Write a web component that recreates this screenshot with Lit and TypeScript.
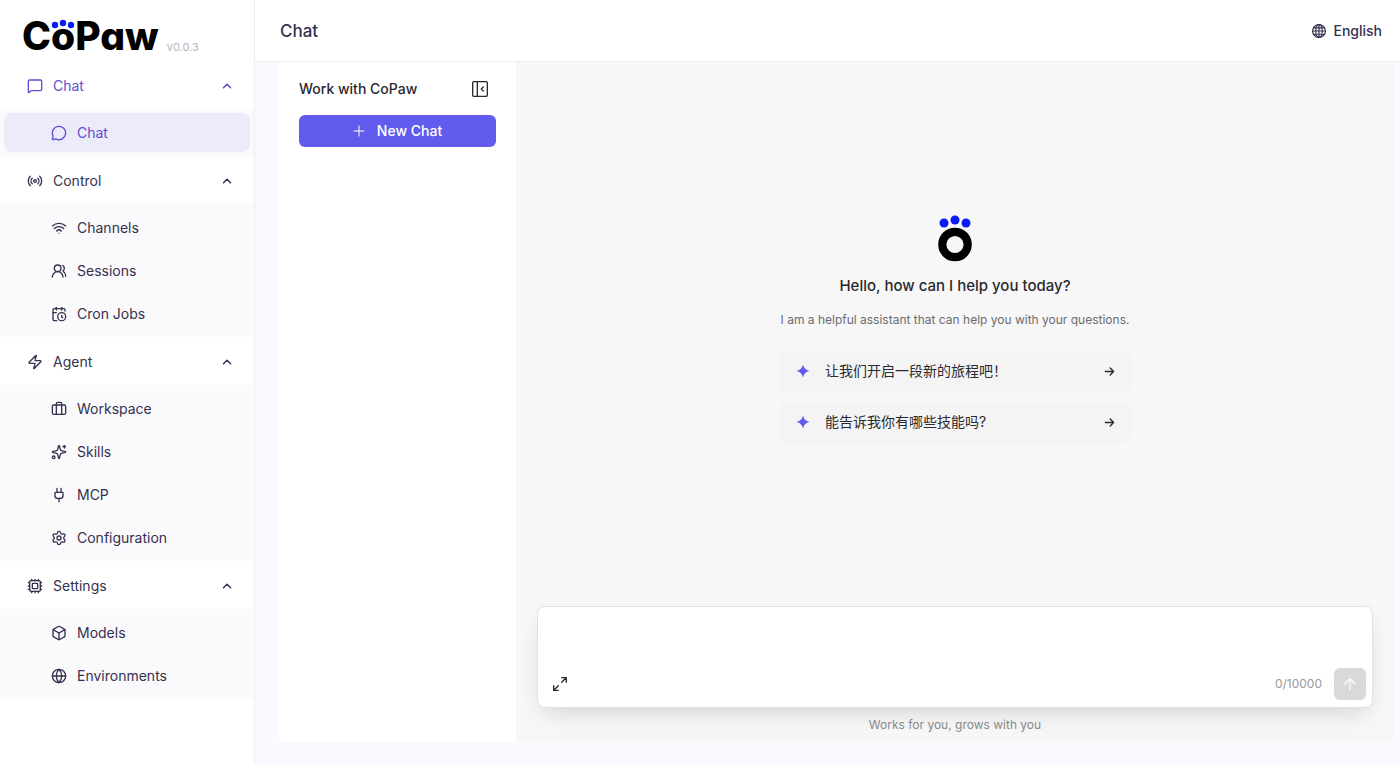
import { LitElement, html, css, svg } from "lit";
import { customElement, property, state } from "lit/decorators.js";
import { classMap } from "lit/directives/class-map.js";

const glyphs: Record<string, unknown> = {
  message: svg`<path d="M22 17a2 2 0 0 1-2 2H6.828a2 2 0 0 0-1.414.586l-2.202 2.202A.71.71 0 0 1 2 21.286V5a2 2 0 0 1 2-2h16a2 2 0 0 1 2 2z"/>`,
  bubble: svg`<path d="M2.992 16.342a2 2 0 0 1 .094 1.167l-1.065 3.290a1 1 0 0 0 1.236 1.168l3.413-.998a2 2 0 0 1 1.099.092 10 10 0 1 0-4.777-4.719"/>`,
  radio: svg`<path d="M4.900 19.100C1 15.200 1 8.800 4.900 4.900"/><path d="M7.800 16.200c-2.300-2.300-2.300-6.100 0-8.500"/><circle cx="12" cy="12" r="2"/><path d="M16.200 7.800c2.300 2.300 2.300 6.100 0 8.500"/><path d="M19.100 4.900C23 8.800 23 15.100 19.100 19"/>`,
  wifi: svg`<path d="M12 20h.01"/><path d="M2 8.820a15 15 0 0 1 20 0"/><path d="M5 12.860a10 10 0 0 1 14 0"/><path d="M8.500 16.430a5 5 0 0 1 7 0"/>`,
  users: svg`<path d="M18 21a8 8 0 0 0-16 0"/><circle cx="10" cy="8" r="5"/><path d="M22 20c0-3.370-2-6.500-4-8a5 5 0 0 0-.450-8.300"/>`,
  calendar: svg`<path d="M21 7.500V6a2 2 0 0 0-2-2H5a2 2 0 0 0-2 2v14a2 2 0 0 0 2 2h3.500"/><path d="M16 2v4"/><path d="M8 2v4"/><path d="M3 10h5"/><path d="M17.500 17.500 16 16.300V14"/><circle cx="16" cy="16" r="6"/>`,
  zap: svg`<path d="M4 14a1 1 0 0 1-.780-1.630l9.900-10.200a.500.500 0 0 1 .860.460l-1.920 6.020A1 1 0 0 0 13 10h7a1 1 0 0 1 .780 1.630l-9.900 10.200a.500.500 0 0 1-.860-.460l1.920-6.020A1 1 0 0 0 11 14z"/>`,
  briefcase: svg`<path d="M16 20V4a2 2 0 0 0-2-2h-4a2 2 0 0 0-2 2v16"/><rect width="20" height="14" x="2" y="6" rx="2"/>`,
  sparkles: svg`<path d="M9.940 15.500A2 2 0 0 0 8.500 14.060l-6.140-1.580a.500.500 0 0 1 0-.960L8.500 9.940A2 2 0 0 0 9.940 8.500l1.580-6.140a.500.500 0 0 1 .960 0L14.060 8.500A2 2 0 0 0 15.500 9.940l6.140 1.580a.500.500 0 0 1 0 .960L15.500 14.060a2 2 0 0 0-1.440 1.440l-1.580 6.140a.500.500 0 0 1-.960 0z"/><path d="M20 2v4"/><path d="M22 4h-4"/><circle cx="4" cy="20" r="2"/>`,
  plug: svg`<path d="M12 22v-5M15 8V2M9 8V2"/><path d="M17 8a1 1 0 0 1 1 1v4a4 4 0 0 1-4 4h-4a4 4 0 0 1-4-4V9a1 1 0 0 1 1-1z"/>`,
  gear: svg`<path d="M9.671 4.136a2.340 2.340 0 0 1 4.659 0 2.340 2.340 0 0 0 3.319 1.915 2.340 2.340 0 0 1 2.330 4.033 2.340 2.340 0 0 0 0 3.831 2.340 2.340 0 0 1-2.330 4.033 2.340 2.340 0 0 0-3.319 1.915 2.340 2.340 0 0 1-4.659 0 2.340 2.340 0 0 0-3.320-1.915 2.340 2.340 0 0 1-2.330-4.033 2.340 2.340 0 0 0 0-3.831A2.340 2.340 0 0 1 6.350 6.051a2.340 2.340 0 0 0 3.319-1.915"/><circle cx="12" cy="12" r="3"/>`,
  chip: svg`<rect x="4" y="4" width="16" height="16" rx="2"/><rect x="8" y="8" width="8" height="8" rx="1"/><path d="M12 20v2M12 2v2M17 20v2M17 2v2M2 12h2M2 17h2M2 7h2M20 12h2M20 17h2M20 7h2M7 20v2M7 2v2"/>`,
  box: svg`<path d="M21 8a2 2 0 0 0-1-1.730l-7-4a2 2 0 0 0-2 0l-7 4A2 2 0 0 0 3 8v8a2 2 0 0 0 1 1.730l7 4a2 2 0 0 0 2 0l7-4A2 2 0 0 0 21 16Z"/><path d="m3.300 7 8.700 5 8.700-5"/><path d="M12 22V12"/>`,
  globe: svg`<circle cx="12" cy="12" r="10"/><path d="M12 2a14.500 14.500 0 0 0 0 20 14.500 14.500 0 0 0 0-20"/><path d="M2 12h20"/>`,
  grid: svg`<circle cx="12" cy="12" r="11"/><ellipse cx="12" cy="12" rx="5.500" ry="11"/><path d="M12 1v22M1 12h22M3 6.500h18M3 17.500h18"/>`,
  chevron: svg`<path d="m5 15.500 7-7 7 7"/>`,
  collapse: svg`<rect x="1" y="1" width="22" height="22" rx="1.500"/><path d="M8 1v22"/><path d="M17 9l-3 3 3 3"/>`,
  plus: svg`<path d="M12 2v20M2 12h20"/>`,
  arrowRight: svg`<path d="M3 12h18M13.500 4.500 21 12l-7.500 7.500"/>`,
  arrowUp: svg`<path d="M12 22V3M3 12l9-9 9 9"/>`,
  expand: svg`<path d="M14.500 9.500 21 3M14.500 2.500h7v7M9.500 14.500 3 21M2.500 14.500v7h7"/>`,
  star: svg`<path d="M12 1c1.600 6.400 4.600 9.400 11 11-6.400 1.600-9.400 4.600-11 11-1.600-6.400-4.600-9.400-11-11 6.400-1.600 9.400-4.600 11-11z" fill="currentColor" stroke="none"/>`,
};

@customElement("ui-icon")
class UiIcon extends LitElement {
  @property() name = "";
  static styles = css`
    :host { display: inline-flex; flex: none; width: 16px; height: 16px; }
    svg {
      width: 100%; height: 100%; fill: none; stroke: currentColor;
      stroke-width: var(--stroke, 2); stroke-linecap: round; stroke-linejoin: round;
    }
  `;
  render() {
    return html`<svg viewBox="0 0 24 24" aria-hidden="true">${glyphs[this.name]}</svg>`;
  }
}

interface Entry { label: string; icon: string; }
interface Section extends Entry { items: Entry[]; }

const sections: Section[] = [
  { label: "Chat", icon: "message", items: [{ label: "Chat", icon: "bubble" }] },
  {
    label: "Control", icon: "radio", items: [
      { label: "Channels", icon: "wifi" },
      { label: "Sessions", icon: "users" },
      { label: "Cron Jobs", icon: "calendar" },
    ],
  },
  {
    label: "Agent", icon: "zap", items: [
      { label: "Workspace", icon: "briefcase" },
      { label: "Skills", icon: "sparkles" },
      { label: "MCP", icon: "plug" },
      { label: "Configuration", icon: "gear" },
    ],
  },
  {
    label: "Settings", icon: "chip", items: [
      { label: "Models", icon: "box" },
      { label: "Environments", icon: "globe" },
    ],
  },
];

@customElement("side-nav")
class SideNav extends LitElement {
  @state() private closed = new Set<string>();

  static styles = css`
    :host {
      display: block; box-sizing: border-box; background: #fff; color: #35314f;
      border-right: 1px solid #eeeef2; overflow-y: auto;
    }
    .brand { display: flex; align-items: flex-end; gap: 8px; height: 62px; padding: 0 22px 8px; box-sizing: border-box; }
    .logo {
      position: relative; font-size: 39px; line-height: 36px; font-weight: 800; color: #000;
      font-feature-settings: "cv11";
    }
    .paw { position: absolute; left: 29px; top: 1px; width: 24px; height: 10px; }
    .version { font-size: 11px; line-height: 14px; color: #b5b5ba; }
    .menu { display: flex; flex-direction: column; gap: 1px; }
    .head {
      display: flex; align-items: center; gap: 10px; width: 100%; height: 47px; padding: 0 21px 0 27px;
      border: 0; background: none; color: inherit; font: inherit; text-align: left; cursor: pointer;
    }
    .head .label { flex: 1; }
    .head.on { color: #5f4fd0; }
    .toggle { width: 12px; height: 12px; --stroke: 3; }
    .shut .toggle { transform: rotate(180deg); }
    .list { list-style: none; margin: 0; padding: 4px; display: flex; flex-direction: column; gap: 4px; background: #fafafc; }
    .item {
      display: flex; align-items: center; gap: 10px; height: 39px; padding-left: 47px; border-radius: 8px;
      color: inherit; text-decoration: none;
    }
    .item.on { background: #ecebfa; color: #5f4fd0; }
  `;

  private toggle(label: string) {
    const next = new Set(this.closed);
    next.has(label) ? next.delete(label) : next.add(label);
    this.closed = next;
  }

  render() {
    return html`
      <div class="brand">
        <span class="logo">CoPaw
          <svg class="paw" viewBox="0 0 24 10" fill="#0a1cf5" aria-hidden="true">
            <circle cx="4" cy="6" r="3.200"/><circle cx="12" cy="4" r="3.200"/><circle cx="20" cy="6" r="3.200"/>
          </svg>
        </span>
        <span class="version">v0.0.3</span>
      </div>
      <nav class="menu">
        ${sections.map((s, i) => html`
          <div>
            <button class=${classMap({ head: true, on: i === 0, shut: this.closed.has(s.label) })}
              aria-expanded=${!this.closed.has(s.label)} @click=${() => this.toggle(s.label)}>
              <ui-icon name=${s.icon}></ui-icon>
              <span class="label">${s.label}</span>
              <ui-icon class="toggle" name="chevron"></ui-icon>
            </button>
            ${this.closed.has(s.label) ? null : html`
              <ul class="list">
                ${s.items.map((it) => html`
                  <li><a class=${classMap({ item: true, on: i === 0 })} href="#">
                    <ui-icon name=${it.icon}></ui-icon>${it.label}
                  </a></li>`)}
              </ul>`}
          </div>`)}
      </nav>`;
  }
}

@customElement("chat-view")
class ChatView extends LitElement {
  @state() private text = "";

  static styles = css`
    :host { display: flex; min-height: 0; color: #2a2a2e; }
    .sessions { flex: none; box-sizing: border-box; width: 237px; padding: 14px 20px; background: #fff; }
    .top { display: flex; align-items: center; justify-content: space-between; height: 26px; padding-right: 8px; }
    .title { margin: 0; font-size: 14px; line-height: 20px; font-weight: 500; }
    button { font: inherit; border: 0; cursor: pointer; }
    .plain { display: flex; padding: 0; background: none; color: inherit; }
    .new {
      display: flex; align-items: center; justify-content: center; gap: 12px; width: 100%; height: 32px; margin-top: 13px;
      border-radius: 6px; background: #615ced; color: #fff; font-weight: 500;
    }
    .new ui-icon { width: 12px; height: 12px; }
    .stage { flex: 1; min-width: 0; display: flex; flex-direction: column; padding: 0 21px; background: #f7f7f7; }
    .welcome { flex: 1; display: flex; flex-direction: column; align-items: center; justify-content: center; padding-bottom: 12px; }
    .mark { width: 36px; height: 48px; }
    .hello { margin: 12px 0 0; font-size: 15px; line-height: 24px; font-weight: 500; }
    .intro { margin: 12px 0 0; font-size: 12px; line-height: 20px; color: #6c6c70; }
    .prompts { display: flex; flex-direction: column; gap: 10px; width: 352px; max-width: 100%; margin-top: 21px; }
    .prompt {
      display: flex; align-items: center; gap: 15px; height: 41px; padding: 0 16px 0 17px; border-radius: 6px;
      background: #f4f4f4; color: inherit; text-align: left;
    }
    .prompt span { flex: 1; }
    .prompt .star { width: 14px; height: 14px; color: #615ced; }
    .prompt .go { width: 11px; height: 11px; --stroke: 3; }
    .composer {
      display: flex; flex-direction: column; box-sizing: border-box; height: 102px; padding: 7px 6px 7px 7px; border: 1px solid #e2e2e4;
      border-radius: 8px; background: #fff; box-shadow: 0 12px 24px -8px rgba(0, 0, 0, 0.12), 0 4px 20px rgba(0, 0, 0, 0.03);
    }
    textarea { flex: 1; min-height: 0; padding: 4px 8px; border: 0; outline: 0; resize: none; background: none; font: inherit; color: inherit; }
    .bar { display: flex; align-items: center; gap: 12px; padding-left: 7px; }
    .count { margin-left: auto; font-size: 12px; color: #98989c; }
    .send { display: flex; align-items: center; justify-content: center; width: 32px; height: 32px; padding: 0; border-radius: 6px; background: #d9d9d9; color: #fff; }
    .send ui-icon { width: 14px; height: 14px; }
    .foot { margin: 0; padding: 7px 0; font-size: 12px; line-height: 20px; text-align: center; color: #88888c; }
  `;

  render() {
    const prompts = ["让我们开启一段新的旅程吧！", "能告诉我你有哪些技能吗?"];
    return html`
      <section class="sessions">
        <div class="top">
          <h2 class="title">Work with CoPaw</h2>
          <button class="plain" aria-label="Collapse panel"><ui-icon name="collapse"></ui-icon></button>
        </div>
        <button class="new"><ui-icon name="plus"></ui-icon>New Chat</button>
      </section>
      <section class="stage">
        <div class="welcome">
          <svg class="mark" viewBox="0 0 36 48" aria-hidden="true">
            <g fill="#0a1cf5"><circle cx="7" cy="9" r="4.500"/><circle cx="18" cy="6" r="4.500"/><circle cx="29" cy="9" r="4.500"/></g>
            <circle cx="18" cy="30.500" r="12.700" fill="none" stroke="#000" stroke-width="8.200"/>
          </svg>
          <h1 class="hello">Hello, how can I help you today?</h1>
          <p class="intro">I am a helpful assistant that can help you with your questions.</p>
          <div class="prompts">
            ${prompts.map((p) => html`
              <button class="prompt" @click=${() => (this.text = p)}>
                <ui-icon class="star" name="star"></ui-icon><span>${p}</span><ui-icon class="go" name="arrowRight"></ui-icon>
              </button>`)}
          </div>
        </div>
        <div class="composer">
          <textarea aria-label="Message" maxlength="10000" .value=${this.text}
            @input=${(e: Event) => (this.text = (e.target as HTMLTextAreaElement).value)}></textarea>
          <div class="bar">
            <button class="plain" aria-label="Expand"><ui-icon name="expand"></ui-icon></button>
            <span class="count">${this.text.length}/10000</span>
            <button class="send" aria-label="Send" ?disabled=${!this.text}><ui-icon name="arrowUp"></ui-icon></button>
          </div>
        </div>
        <p class="foot">Works for you, grows with you</p>
      </section>`;
  }
}

@customElement("app-root")
class AppRoot extends LitElement {
  static styles = css`
    :host {
      display: grid; grid-template-columns: 255px minmax(0, 1fr); height: 100vh; background: #f8faff;
      font: 14px/20px Inter, "Noto Sans CJK SC", sans-serif;
    }
    .main { display: flex; flex-direction: column; min-height: 0; }
    .header {
      display: flex; align-items: center; justify-content: space-between; box-sizing: border-box; height: 62px;
      padding: 0 18px 0 25px; border-bottom: 1px solid #eeeef0; background: #fff; color: #35314f;
    }
    .page { margin: 0; font-size: 17px; line-height: 24px; font-weight: 500; }
    .lang { display: flex; align-items: center; gap: 7px; padding: 0; border: 0; background: none; color: inherit; font: inherit; font-weight: 500; }
    .lang ui-icon { width: 14px; height: 14px; }
    .view { flex: 1; margin: 0 6px 22px 24px; }
  `;
  render() {
    return html`
      <side-nav></side-nav>
      <main class="main">
        <header class="header">
          <h1 class="page">Chat</h1>
          <button class="lang"><ui-icon name="grid"></ui-icon>English</button>
        </header>
        <chat-view class="view"></chat-view>
      </main>`;
  }
}
